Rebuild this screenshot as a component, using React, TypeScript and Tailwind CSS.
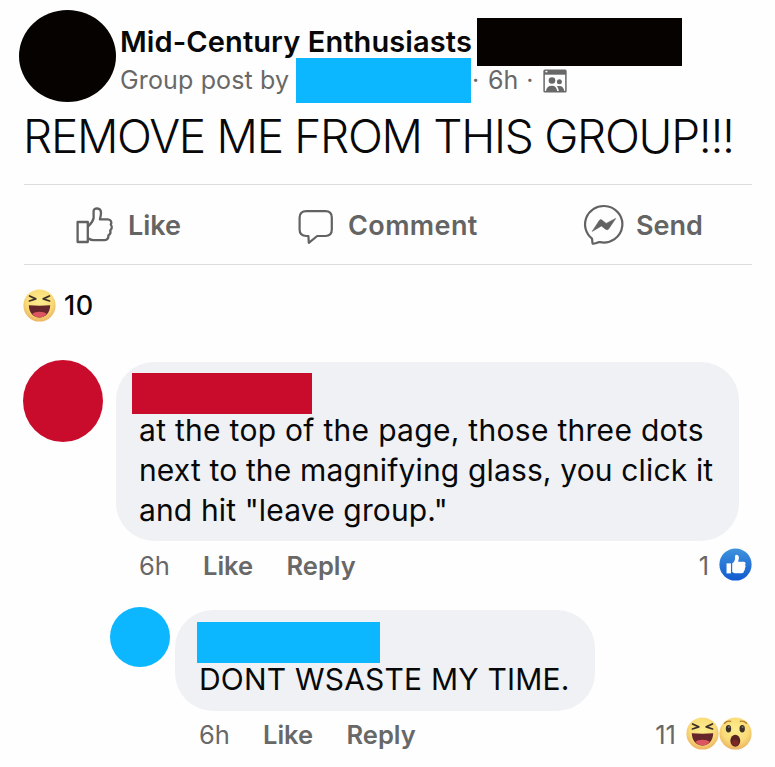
import type { ReactNode } from "react";

function ThumbOutline() {
  return (
    <svg className="mb-[3px] h-[38px] w-[38px] shrink-0" viewBox="0 0 38 38" fill="none" stroke="#626262" strokeWidth="2.3" strokeLinejoin="round" strokeLinecap="round">
      <path d="M1.6 16H11.8V36H1.6Z" />
      <path d="M12.4 20.2C14.2 18.4 17 16 17.6 12V5C17.6 1.6 24.8 1.2 25 6.6C25.1 9 24.4 11.4 23.9 13.4H31.8C35.2 13.6 36 16.4 34.8 18.6C36.4 20.6 36 23 34.2 24.4C35 26.8 34.2 28.4 32.4 29.2C32.6 32 31.4 34 28.6 34.2H17.4C14.8 34.2 13.8 33.4 12.4 32.4" />
    </svg>
  );
}

function CommentBubble() {
  return (
    <svg className="mt-[1px] h-[37px] w-[37px] shrink-0" viewBox="0 0 37 37" fill="none" stroke="#626262" strokeWidth="2.2" strokeLinejoin="round">
      <path d="M8.4 2.2H27.4Q33.8 2.2 33.8 8.6V20.6Q33.8 27 27.4 27H19.2L10.8 33.8L10.4 27H8.4Q1.6 27 1.6 20.6V8.6Q1.6 2.2 8.4 2.2Z" />
    </svg>
  );
}

function Messenger() {
  return (
    <svg className="mb-[4px] h-[41px] w-[41px] shrink-0" viewBox="0 0 41 41">
      <path d="M21.2 2A18.7 18.3 0 1 1 16.8 38.2C14 38 12.6 39.9 9.7 39.6C9 39.2 9.7 36 8.8 34.4A18.6 18.3 0 0 1 21.2 2Z" fill="none" stroke="#626262" strokeWidth="2.2" />
      <path d="M9.2 27.4L16.3 16.5Q17.4 14.9 19.2 16.2L23.2 19.4L32.7 14.4L25.8 24.8Q24.5 26.6 22.6 25.2L18.4 22Z" fill="#626262" stroke="#626262" strokeWidth=".6" strokeLinejoin="round" />
    </svg>
  );
}

function GroupIcon() {
  return (
    <svg className="ml-[9px] h-[24px] w-[24px] shrink-0" viewBox="0 0 24 24">
      <rect x="1.1" y="1.3" width="21.8" height="21.4" rx=".8" fill="none" stroke="#686868" strokeWidth="1.5" />
      <path d="M1 1H23V5.7H1Z" fill="#686868" />
      <path d="M2.4 2.6H4.4" stroke="white" strokeWidth="1.5" />
      <g fill="#686868">
        <circle cx="9" cy="11.5" r="3.3" />
        <circle cx="16.4" cy="12.8" r="2.5" />
        <path d="M3 22.6Q3.2 16.7 9 16.7Q13.6 16.7 14.3 22.6Z" />
        <path d="M13.8 17.3Q20.7 15.5 21.4 22.6H16Q15.8 19.1 13.8 17.3Z" />
      </g>
    </svg>
  );
}

function FaceShade({ id }: { id: string }) {
  return (
    <>
      <defs>
        <radialGradient id={id} cx=".5" cy=".38" r=".64">
          <stop offset="0" stopColor="#fdec8e" />
          <stop offset=".62" stopColor="#f9dc78" />
          <stop offset="1" stopColor="#ebb060" />
        </radialGradient>
      </defs>
      <circle cx="16" cy="16" r="15.6" fill={`url(#${id})`} />
    </>
  );
}

function Haha({ id }: { id: string }) {
  return (
    <svg className="h-[33px] w-[33px] shrink-0" viewBox="0 0 32 32">
      <FaceShade id={id} />
      <path d="M6.4 6.8L12.4 9.6L6.2 11.6M25.6 6.8L19.6 9.6L25.8 11.6" fill="none" stroke="#3c302b" strokeWidth="1.7" strokeLinecap="round" strokeLinejoin="round" />
      <path d="M5.6 15.8Q16 16.6 26.4 15.8C26.2 22.8 22.2 27.6 16 27.6S5.8 22.8 5.6 15.8Z" fill="#65252a" />
      <path d="M9 24.3C11.5 21.2 20.5 21.2 23 24.3C20.8 26.8 18.7 27.6 16 27.6S11.2 26.8 9 24.3Z" fill="#dc5560" />
    </svg>
  );
}

function Wow() {
  return (
    <svg className="h-[33px] w-[33px] shrink-0" viewBox="0 0 32 32">
      <FaceShade id="wow" />
      <path d="M5.3 6Q8 3.4 11.3 4.2M20.7 4.2Q24 3.4 26.7 6" fill="none" stroke="#b7812f" strokeWidth="1.4" strokeLinecap="round" />
      <ellipse cx="9.2" cy="11.4" rx="2.6" ry="3.6" fill="#3c3029" />
      <ellipse cx="22.5" cy="11.4" rx="2.6" ry="3.6" fill="#3c3029" />
      <circle cx="9.6" cy="9.8" r=".9" fill="#8b7969" />
      <circle cx="22.9" cy="9.8" r=".9" fill="#8b7969" />
      <ellipse cx="15.8" cy="23" rx="4.8" ry="5.8" fill="#5b2222" />
      <ellipse cx="15.8" cy="25" rx="3.3" ry="3" fill="#7d2a25" />
    </svg>
  );
}

function LikeBadge() {
  return (
    <svg className="h-[33px] w-[33px] shrink-0" viewBox="0 0 32 32">
      <defs>
        <linearGradient id="like" x1="0" y1="0" x2="0" y2="1">
          <stop offset="0" stopColor="#3e93dc" />
          <stop offset="1" stopColor="#1259d0" />
        </linearGradient>
      </defs>
      <circle cx="16" cy="16" r="15.6" fill="url(#like)" />
      <path d="M7.3 14.9H11.6V24.6H7.3Z" fill="white" />
      <path d="M12.8 15C14.9 13.6 15.5 11.9 15.6 9.2V7.6C16.1 5.8 19.2 6.4 19.3 9.3C19.3 11 18.8 12.3 18.5 13.4H24.2C26 13.7 26.1 15.4 25.3 16.4C26.1 17.4 25.9 18.8 25 19.4C25.5 20.5 25 21.8 24.1 22.2C24.2 23.6 23.3 24.4 21.9 24.4H16.3C14.7 24.4 13.8 23.8 12.8 23.2Z" fill="white" />
    </svg>
  );
}

function Action({ icon, label, className }: { icon: ReactNode; label: string; className: string }) {
  return (
    <div className={`flex items-center pt-[4px] text-[27px] font-semibold text-[#646464] ${className}`}>
      {icon}
      <span>{label}</span>
    </div>
  );
}

function Meta({ count, children }: { count: string; children: ReactNode }) {
  return (
    <div className="flex h-[40px] items-center text-[25.5px] text-[#686868]">
      <span className="w-[64px]">6h</span>
      <span className="w-[83.5px] font-semibold">Like</span>
      <span className="font-semibold">Reply</span>
      <span className="ml-auto">{count}</span>
      {children}
    </div>
  );
}

export default function App() {
  return (
    <main className="h-[767px] w-[775px] overflow-hidden bg-[#fefefe] font-['Inter',sans-serif] whitespace-nowrap text-[#080809]">
      <header className="flex h-[112px] pl-[19px]">
        <div className="mt-[10px] h-[92px] w-[97px] shrink-0 rounded-[50%] bg-[#050200]" />
        <div className="ml-[4px] pt-[18px]">
          <div className="flex h-[48px] items-center">
            <span className="w-[357px] text-[29px] font-semibold tracking-[0.1px]">Mid-Century Enthusiasts</span>
            <div className="h-[48px] w-[205px] bg-[#050200]" />
          </div>
          <div className="-mt-[8px] flex h-[45px] items-center text-[25px] text-[#686868]">
            <span className="w-[176px] pt-px tracking-[0.15px]">Group post by</span>
            <div className="h-[45px] w-[175px] bg-[#0db7ff]" />
            <span className="ml-[1px] w-[16px] pt-px">·</span>
            <span className="pt-px">6h</span>
            <span className="ml-[8px] pt-px">·</span>
            <GroupIcon />
          </div>
        </div>
      </header>

      <h1 className="flex h-[72px] items-center pb-[24px] pl-[23px] text-[46px] font-light tracking-[-1.3px]">REMOVE ME FROM THIS GROUP!!!</h1>

      <nav className="mr-[23px] ml-[24px] flex h-[81px] border-y border-[#dcdddf]">
        <Action className="w-[274px] gap-[14px] pl-[52px]" icon={<ThumbOutline />} label="Like" />
        <Action className="w-[285px] gap-[13px] tracking-[0.4px]" icon={<CommentBubble />} label="Comment" />
        <Action className="gap-[12px]" icon={<Messenger />} label="Send" />
      </nav>

      <div className="flex h-[81px] items-center gap-[8px] pl-[23px] text-[27px] font-medium tracking-[0.5px]">
        <Haha id="haha-post" />
        <span className="pt-[2px]">10</span>
      </div>

      <section className="flex h-[240px] pt-[14px] pl-[23px]">
        <div className="h-[82px] w-[80px] shrink-0 rounded-[50%] bg-[#c90c2b]" />
        <div className="ml-[13px] w-[636px] pt-[2px]">
          <div className="h-[179px] w-[623px] rounded-[38px] bg-[#eff1f4] pt-[11px] pl-[16px]">
            <div className="h-[41px] w-[180px] bg-[#c90c2b]" />
            <p className="-mt-[4px] pl-[7px] text-[30px] leading-[40px]">
              <span className="block tracking-[0.29px]">at the top of the page, those three dots</span>
              <span className="block tracking-[0.15px]">next to the magnifying glass, you click it</span>
              <span className="block tracking-[0.14px]">and hit "leave group."</span>
            </p>
          </div>
          <div className="pt-[5px] pl-[23px]">
            <Meta count="1"><span className="mb-[3px] ml-[10px] flex"><LikeBadge /></span></Meta>
          </div>
        </div>
      </section>

      <section className="flex pt-[21px] pl-[110px]">
        <div className="h-[60px] w-[60px] shrink-0 rounded-full bg-[#0db7ff]" />
        <div className="ml-[5px] w-[577px] pt-[3px]">
          <div className="h-[101px] w-[420px] rounded-[38px] bg-[#eff1f4] pt-[12px] pl-[22px]">
            <div className="h-[41px] w-[183px] bg-[#0db7ff]" />
            <p className="-mt-[4px] pl-[2px] text-[30px] leading-[40px] tracking-[0.2px]">DONT WSASTE MY TIME.</p>
          </div>
          <div className="pt-[4px] pl-[24px]">
            <Meta count="11">
              <span className="mb-[4px] ml-[10px] flex"><Haha id="haha-reply" /><Wow /></span>
            </Meta>
          </div>
        </div>
      </section>
    </main>
  );
}
